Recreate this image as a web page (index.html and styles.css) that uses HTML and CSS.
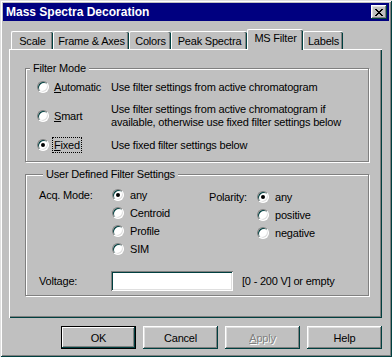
FILE: index.html
```html
<!DOCTYPE html>
<html lang="en">
<head>
    <meta charset="UTF-8">
    <title>Mass Spectra Decoration</title>
    <link rel="stylesheet" href="styles.css">
</head>
<body>
    <div class="window">
        <div class="titlebar">
            <span class="title">Mass Spectra Decoration</span>
            <button class="close" aria-label="Close">
                <svg width="8" height="7" viewBox="0 0 8 7">
                    <path d="M0 0h2v1h-2zM6 0h2v1h-2zM1 1h2v1h-2zM5 1h2v1h-2zM2 2h4v1h-4zM3 3h2v1h-2zM2 4h4v1h-4zM1 5h2v1h-2zM5 5h2v1h-2zM0 6h2v1h-2zM6 6h2v1h-2z" fill="#000"/>
                </svg>
            </button>
        </div>

        <div class="content">
            <div class="tabs">
                <div class="tab tab-scale">Scale</div>
                <div class="tab tab-frame">Frame &amp; Axes</div>
                <div class="tab tab-colors">Colors</div>
                <div class="tab tab-peak">Peak Spectra</div>
                <div class="tab tab-filter active">MS Filter</div>
                <div class="tab tab-labels">Labels</div>
            </div>

            <div class="panel">
                <fieldset class="group">
                    <legend>Filter Mode</legend>
                    <div class="mode-list">
                        <span class="radio"></span>
                        <span class="opt"><u>A</u>utomatic</span>
                        <span class="desc">Use filter settings from active chromatogram</span>

                        <span class="radio"></span>
                        <span class="opt"><u>S</u>mart</span>
                        <span class="desc">Use filter settings from active chromatogram if<br>available, otherwise use fixed filter settings below</span>

                        <span class="radio checked"></span>
                        <span class="opt"><span class="focus"><u>F</u>ixed</span></span>
                        <span class="desc">Use fixed filter settings below</span>
                    </div>
                </fieldset>

                <fieldset class="group user">
                    <legend>User Defined Filter Settings</legend>
                    <div class="choices">
                        <div class="choice-block">
                            <span class="field-label acq">Acq. Mode:</span>
                            <div class="radio-list">
                                <label class="radio-item"><span class="radio checked"></span>any</label>
                                <label class="radio-item"><span class="radio"></span>Centroid</label>
                                <label class="radio-item"><span class="radio"></span>Profile</label>
                                <label class="radio-item"><span class="radio"></span>SIM</label>
                            </div>
                        </div>
                        <div class="choice-block polarity">
                            <span class="field-label pol">Polarity:</span>
                            <div class="radio-list">
                                <label class="radio-item"><span class="radio checked"></span>any</label>
                                <label class="radio-item"><span class="radio"></span>positive</label>
                                <label class="radio-item"><span class="radio"></span>negative</label>
                            </div>
                        </div>
                    </div>
                    <div class="voltage-row">
                        <span class="field-label volt">Voltage:</span>
                        <input class="textbox" type="text">
                        <span class="hint">[0 - 200 V] or empty</span>
                    </div>
                </fieldset>
            </div>

            <div class="buttons">
                <button class="btn default">OK</button>
                <button class="btn">Cancel</button>
                <button class="btn disabled"><u>A</u>pply</button>
                <button class="btn">Help</button>
            </div>
        </div>
    </div>
</body>
</html>
```

FILE: styles.css
```css
body {
    margin: 0;
    background: #c0c0c0;
    font-family: 'Liberation Sans', Arial, sans-serif;
    font-size: 11px;
    letter-spacing: -0.2px;
    color: #000;
}

.window {
    width: 392px;
    height: 357px;
    box-sizing: border-box;
    padding: 3px;
    background: #c0c0c0;
    box-shadow: inset 1px 1px #dfdfdf, inset -1px -1px #004040,
                inset 2px 2px #fff, inset -2px -2px #808080;
}

/* title bar */
.titlebar {
    height: 18px;
    background: #000080;
    display: flex;
    align-items: center;
    justify-content: space-between;
}

.title {
    color: #fff;
    font-weight: bold;
    font-size: 12px;
    letter-spacing: 0;
    padding-left: 3px;
}

.close {
    width: 16px;
    height: 14px;
    margin-right: 2px;
    padding: 0;
    border: none;
    background: #c0c0c0;
    display: flex;
    align-items: center;
    justify-content: center;
    box-shadow: inset -1px -1px #004040, inset 1px 1px #fff,
                inset -2px -2px #808080, inset 2px 2px #dfdfdf;
}

.content {
    padding: 8px 7px 0 6px;
}

/* tabs */
.tabs {
    height: 20px;
    display: flex;
    align-items: flex-end;
    padding-left: 2px;
}

.tab {
    height: 18px;
    box-sizing: border-box;
    padding-top: 3px;
    text-align: center;
    border-left: 1px solid #fff;
    border-top: 1px solid #fff;
    border-radius: 2px 2px 0 0;
    box-shadow: inset -1px 0 #004040, inset -2px 0 #808080;
    white-space: nowrap;
}

.tab-scale { width: 42px; }
.tab-frame { width: 76px; }
.tab-colors { width: 42px; }
.tab-peak { width: 76px; }
.tab-filter { width: 56px; }
.tab-labels { width: 40px; }

.tab.active {
    position: relative;
    z-index: 1;
    height: 21px;
    margin-bottom: -1px;
    padding-top: 2px;
    background: #c0c0c0;
}

/* panel */
.panel {
    height: 269px;
    box-sizing: border-box;
    padding: 13px 13px 0 16px;
    box-shadow: inset 1px 1px #fff, inset -1px -1px #004040, inset -2px -2px #808080;
}

.group {
    margin: 0;
    padding: 0 0 3px 0;
    min-inline-size: 0;
    border: 1px solid #808080;
    box-shadow: 1px 1px #fff, inset 1px 1px #fff;
}

.group legend {
    margin-left: 4px;
    padding: 0 3px;
    line-height: 13px;
    background: #c0c0c0;
}

.mode-list {
    display: grid;
    grid-template-columns: 17px 57px auto;
    grid-auto-rows: 26px;
    row-gap: 3px;
    align-items: center;
    margin-top: -1px;
    padding-left: 11px;
    line-height: 13px;
}

.focus {
    outline: 1px dotted #000;
    outline-offset: 1px;
}

.radio {
    width: 12px;
    height: 12px;
    box-sizing: border-box;
    border-radius: 50%;
    border: 1px solid;
    border-color: #808080 #fff #fff #808080;
    background: #fff;
    box-shadow: inset 1px 1px #004040, inset -1px -1px #dfdfdf;
    display: flex;
    align-items: center;
    justify-content: center;
}

.radio.checked::after {
    content: '';
    width: 4px;
    height: 4px;
    border-radius: 50%;
    background: #000;
}

/* user defined settings */
.user {
    margin-top: 6px;
    padding: 5px 0 4px 13px;
}

.choices {
    display: flex;
}

.choice-block {
    display: flex;
}

.field-label.acq {
    width: 73px;
    line-height: 18px;
}

.field-label.pol {
    width: 48px;
    line-height: 18px;
}

.polarity {
    margin-top: 2px;
}

.radio-list {
    width: 97px;
}

.radio-item {
    height: 18px;
    display: flex;
    align-items: center;
    gap: 6px;
}

.voltage-row {
    display: flex;
    align-items: center;
    margin-top: 13px;
}

.field-label.volt {
    width: 72px;
}

.textbox {
    width: 122px;
    height: 20px;
    box-sizing: border-box;
    margin: 0;
    border: none;
    background: #fff;
    box-shadow: inset 1px 1px #808080, inset -1px -1px #fff,
                inset 2px 2px #004040, inset -2px -2px #dfdfdf;
}

.hint {
    margin-left: 9px;
}

/* dialog buttons */
.buttons {
    display: flex;
    justify-content: flex-end;
    gap: 7px;
    margin-top: 8px;
}

.btn {
    width: 75px;
    height: 23px;
    padding: 0;
    border: none;
    background: #c0c0c0;
    font-family: inherit;
    font-size: 11px;
    letter-spacing: -0.2px;
    color: #000;
    box-shadow: inset -1px -1px #004040, inset 1px 1px #fff,
                inset -2px -2px #808080, inset 2px 2px #dfdfdf;
}

.btn.default {
    border: 1px solid #000;
    box-shadow: inset -1px -1px #004040, inset 1px 1px #fff,
                inset -2px -2px #808080;
}

.btn.disabled {
    color: #808080;
    text-shadow: 1px 1px #fff;
}
```
